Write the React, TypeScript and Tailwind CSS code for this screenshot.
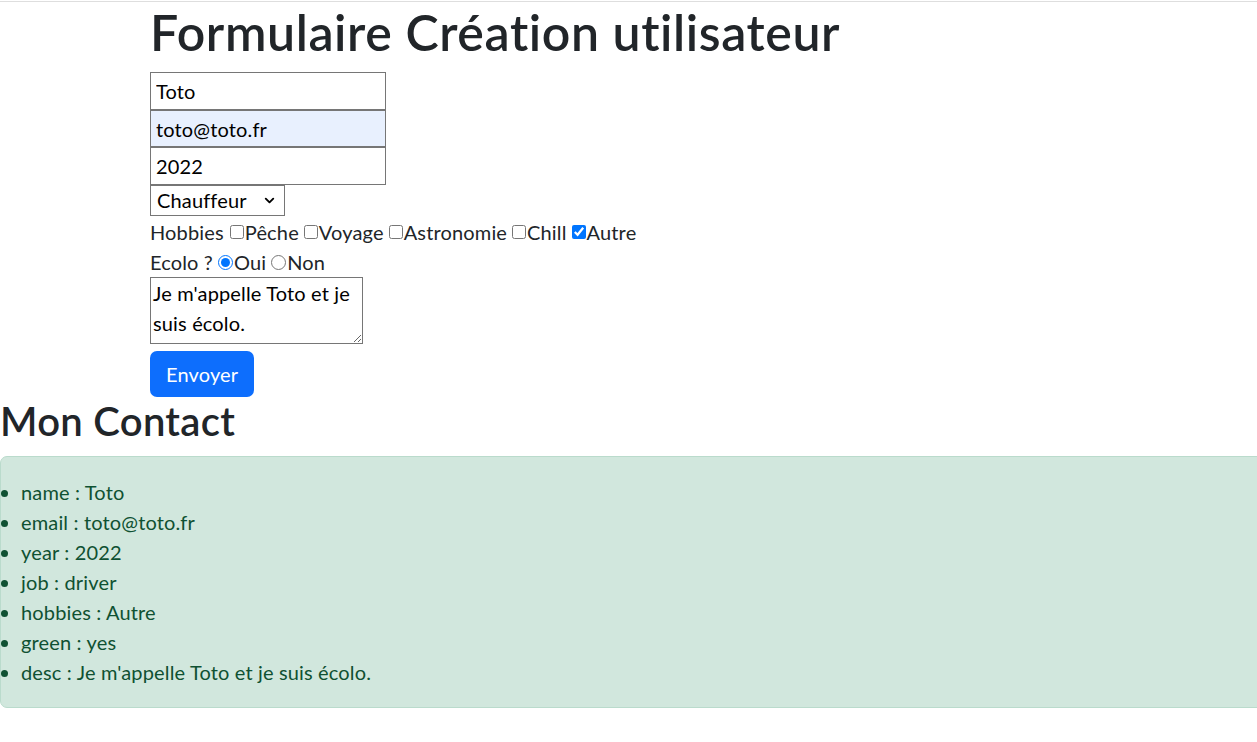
import React from 'react'
import { ChevronDown } from 'lucide-react'

const hobbies = [
  { label: 'Pêche', checked: false },
  { label: 'Voyage', checked: false },
  { label: 'Astronomie', checked: false },
  { label: 'Chill', checked: false },
  { label: 'Autre', checked: true },
]

const contact = [
  ['name', 'Toto'],
  ['email', 'toto@toto.fr'],
  ['year', '2022'],
  ['job', 'driver'],
  ['hobbies', 'Autre'],
  ['green', 'yes'],
  ['desc', "Je m'appelle Toto et je suis écolo."],
]

export default function App() {
  return (
    <div className="min-h-screen w-full overflow-x-hidden bg-white text-[20px] leading-[30px] tracking-[0.15px] text-[#212529] [font-variant-ligatures:none] font-['Lato','Liberation_Sans',sans-serif]">
      <div className="mt-px h-px w-full bg-[#dedede]" />

      <form className="pl-[150px]" onSubmit={(e) => e.preventDefault()}>
        <h1 className="mb-[10px] text-[50px] font-semibold leading-[60px] tracking-[0.6px]">Formulaire Création utilisateur</h1>

        <input
          defaultValue="Toto"
          className="block h-[38px] w-[236px] border border-[#767676] bg-white px-[5px] text-[20px] text-black outline-none"
        />
        <input
          defaultValue="toto@toto.fr"
          className="block h-[37px] w-[236px] border border-[#767676] bg-[#e8f0fe] px-[5px] text-[20px] text-black outline-none"
        />
        <input
          defaultValue="2022"
          className="block h-[38px] w-[236px] border border-[#767676] bg-white px-[5px] text-[20px] text-black outline-none"
        />

        <div className="relative h-[31px] w-[135px]">
          <select
            defaultValue="driver"
            className="h-full w-full appearance-none border border-[#767676] bg-white pl-[6px] text-[20px] leading-[29px] text-black outline-none"
          >
            <option value="driver">Chauffeur</option>
          </select>
          <ChevronDown className="pointer-events-none absolute right-[8px] top-[8px] h-[15px] w-[15px] text-black" strokeWidth={3} />
        </div>

        <div className="mt-px flex items-center">
          <span className="mr-[6px]">Hobbies</span>
          {hobbies.map((h) => (
            <label key={h.label} className="mr-[5px] flex items-center">
              <input type="checkbox" defaultChecked={h.checked} className="m-0 mr-px h-[14px] w-[14px] accent-[#0075ff]" />
              {h.label}
            </label>
          ))}
        </div>

        <div className="flex items-center">
          <span className="mr-[5px]">Ecolo ?</span>
          <label className="mr-[5px] flex items-center">
            <input type="radio" name="green" defaultChecked className="m-0 mr-px h-[15px] w-[15px] accent-[#0075ff]" />
            Oui
          </label>
          <label className="flex items-center">
            <input type="radio" name="green" className="m-0 mr-px h-[15px] w-[15px] accent-[#0075ff]" />
            Non
          </label>
        </div>

        <textarea
          defaultValue="Je m'appelle Toto et je suis écolo."
          className="block h-[67px] w-[213px] border border-[#767676] px-[2px] text-[20px] leading-[30px] text-black outline-none"
        />

        <button className="mt-[7px] h-[46px] rounded-[7px] bg-[#0d6efd] px-[16px] text-[20px] text-white">Envoyer</button>
      </form>

      <h2 className="mb-[11px] text-[40px] font-semibold leading-[48px] tracking-[0.3px]">Mon Contact</h2>

      <div className="w-[1280px] rounded-[7px] border border-[#badbcc] bg-[#d1e7dd] p-[20px] text-[#0f5132]">
        <ul className="list-disc pl-0">
          {contact.map(([k, v]) => (
            <li key={k}>
              {k} : {v}
            </li>
          ))}
        </ul>
      </div>
    </div>
  )
}
